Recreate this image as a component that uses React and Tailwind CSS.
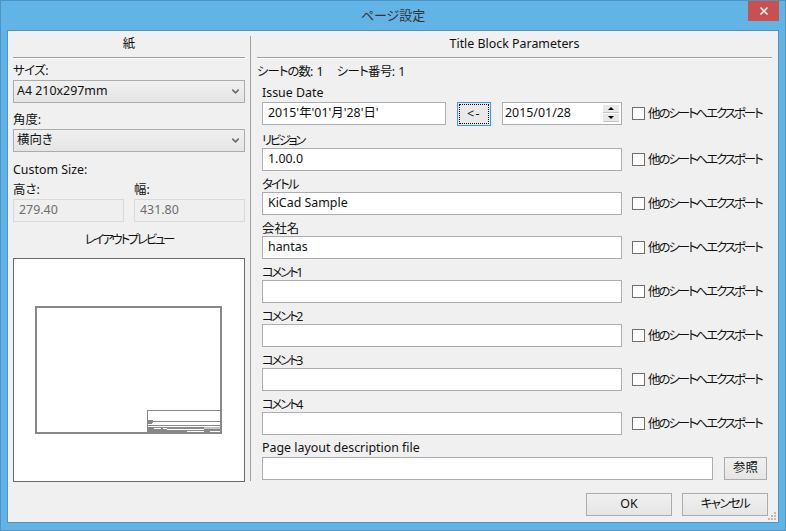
import { ChevronDown, X } from 'lucide-react';

const rows = [
  { label: 'リビジョン', value: '1.00.0', track: 'tracking-[-2.4px]' },
  { label: 'タイトル', value: 'KiCad Sample', track: 'tracking-[-1.8px]' },
  { label: '会社名', value: 'hantas', track: '' },
  { label: 'コメント1', value: '', track: 'tracking-[-2.2px]' },
  { label: 'コメント2', value: '', track: 'tracking-[-2.2px]' },
  { label: 'コメント3', value: '', track: 'tracking-[-2.2px]' },
  { label: 'コメント4', value: '', track: 'tracking-[-2.2px]' },
];

function Label({ children, className = '' }) {
  return <div className={`h-4 leading-4 whitespace-nowrap ${className}`}>{children}</div>;
}

function Field({ children, className = '' }) {
  return (
    <div className={`h-[23px] shrink-0 border border-[#abadb3] bg-white pl-[5px] leading-[19px] whitespace-nowrap ${className}`}>
      {children}
    </div>
  );
}

function Select({ children }) {
  return (
    <div className="mt-px flex h-[23px] items-center justify-between border border-[#acacac] bg-gradient-to-b from-[#f0f0f0] to-[#e5e5e5] pl-[3px] pr-[3px]">
      <span>{children}</span>
      <ChevronDown size={11} strokeWidth={3.5} className="text-[#6d6d6d]" />
    </div>
  );
}

function Disabled({ children }) {
  return (
    <div className="mt-px h-[23px] border border-[#d9d9d9] bg-[#efefef] pl-[5px] leading-[19px] text-[#6d6d6d]">
      {children}
    </div>
  );
}

function Button({ children, className = '' }) {
  return (
    <div className={`flex h-[23px] shrink-0 items-center justify-center border border-[#acacac] bg-gradient-to-b from-[#f0f0f0] to-[#e5e5e5] ${className}`}>
      {children}
    </div>
  );
}

function Export() {
  return (
    <div className="ml-[10px] flex h-[23px] items-center whitespace-nowrap">
      <div className="h-[13px] w-[13px] shrink-0 border border-[#707070] bg-white" />
      <span className="ml-[3px] pt-[2px] tracking-[-2px]">他のシートへエクスポート</span>
    </div>
  );
}

function Header({ children }) {
  return (
    <div className="h-[22px] border-b border-[#a0a0a0] text-center leading-4 shadow-[0_1px_0_#ffffff]">{children}</div>
  );
}

function Preview() {
  return (
    <svg width="232" height="224" className="mt-[10px] block border border-[#696969] bg-white">
      <g fill="#888888">
        <path fillRule="evenodd" d="M21 47H208V175H21ZM23 49V173H206V49Z" />
        <path d="M133 151H206V152H133ZM133 151H134V174H133ZM134 162H206V163H134ZM134 166H206V167H134Z" />
        <path d="M134 161H139V164H134ZM134 164H138V165H134Z" />
        <path d="M134 168H206V174H134Z" />
      </g>
      <g fill="#ffffff">
        <path d="M140 169H147V170H140ZM149 169H153V170H149ZM153 170H190V171H153ZM190 168.500H206V169.500H190ZM173 172H190V173H173ZM196 172H206V173H196Z" />
      </g>
    </svg>
  );
}

export default function App() {
  return (
    <div className="relative flex h-[531px] w-[786px] flex-col border border-[#4f93c1] bg-[#63b4e6] px-[6px] pb-[7px] font-['Noto_Sans','Noto_Sans_CJK_JP',sans-serif] text-[12.4px] text-[#111] [font-feature-settings:'palt']">
      <div className="flex h-[29px] shrink-0 items-center justify-center text-[13px] text-[#333]">ページ設定</div>
      <div className="absolute right-[6px] top-0 flex h-[20px] w-[31px] items-center justify-center bg-[#c75050]">
        <X size={12} strokeWidth={3} className="text-white" />
      </div>

      <div className="relative flex-1 border border-[#4f93c1] bg-[#f0f0f0] pt-[5px]">
        <div className="flex">
          <div className="ml-[5px] w-[232px]">
            <Header>紙</Header>
            <Label className="mt-[5px] tracking-[-0.5px]">サイズ:</Label>
            <Select>A4 210x297mm</Select>
            <Label className="mt-[9px]">角度:</Label>
            <Select>横向き</Select>
            <Label className="mt-[10px]">Custom Size:</Label>
            <div className="mt-[4px] flex gap-[10px]">
              <div className="w-[111px]">
                <Label>高さ:</Label>
                <Disabled>279.40</Disabled>
              </div>
              <div className="w-[111px]">
                <Label>幅:</Label>
                <Disabled>431.80</Disabled>
              </div>
            </div>
            <Label className="mt-[10px] text-center tracking-[-2.2px]">レイアウトプレビュー</Label>
            <Preview />
          </div>

          <div className="ml-[5px] h-[445px] w-px bg-[#a0a0a0]" />

          <div className="ml-[6px] w-[515px]">
            <Header>Title Block Parameters</Header>
            <Label className="mt-[6px] h-[15px]">
              <span className="tracking-[-0.9px]">シートの数</span>: 1
              <span className="ml-[13px] tracking-[-0.6px]">シート番号</span>: 1
            </Label>
            <div className="pl-[5px]">
              <Label className="mt-[6px] h-[15px]">Issue Date</Label>
              <div className="mt-[2px] flex h-[23px] items-start">
                <Field className="w-[184px]">2015'年'01'月'28'日'</Field>
                <div className="ml-[11px] flex h-[24px] w-[34px] shrink-0 items-center justify-center border border-[#3399ff] bg-[#e9e9e9]">
                  <div className="flex h-[20px] w-[30px] items-center justify-center border border-dotted border-black tracking-[1.5px]">&lt;-</div>
                </div>
                <div className="ml-[11px] flex h-[23px] w-[120px] shrink-0 items-center justify-between border border-[#abadb3] bg-white pl-[2px] pr-[2px]">
                  <span className="leading-[19px] self-start">2015/01/28</span>
                  <div className="flex flex-col gap-px">
                    <div className="flex h-[8px] w-[16px] items-center justify-center border-b border-[#c4c4c4] bg-[#e8e8e8]">
                      <div className="h-0 w-0 border-x-[3px] border-b-[3px] border-x-transparent border-b-black" />
                    </div>
                    <div className="flex h-[8px] w-[16px] items-center justify-center border-b border-[#c4c4c4] bg-[#e8e8e8]">
                      <div className="h-0 w-0 border-x-[3px] border-t-[3px] border-x-transparent border-t-black" />
                    </div>
                  </div>
                </div>
                <Export />
              </div>

              {rows.map((row, i) => (
                <div key={row.label}>
                  <Label className={`${i === 0 ? 'mt-[7px]' : 'mt-[5px]'} leading-[18px] ${row.track}`}>{row.label}</Label>
                  <div className="flex items-center">
                    <Field className="w-[360px]">{row.value}</Field>
                    <Export />
                  </div>
                </div>
              ))}

              <Label className="mt-[4px] leading-[18px]">Page layout description file</Label>
              <div className="mt-[2px] flex">
                <Field className="w-[451px]" />
                <Button className="ml-[11px] w-[43px]">参照</Button>
              </div>
            </div>
          </div>
        </div>

        <div className="mt-[11px] flex justify-end gap-[10px] pr-[10px]">
          <Button className="w-[86px]">OK</Button>
          <Button className="w-[86px] tracking-[-1.5px]">キャンセル</Button>
        </div>

        <svg width="10" height="10" className="absolute bottom-[1px] right-[1px]" fill="#bcbcbc">
          <path d="M7 1h2v2H7ZM4 4h2v2H4ZM7 4h2v2H7ZM1 7h2v2H1ZM4 7h2v2H4ZM7 7h2v2H7Z" />
        </svg>
      </div>
    </div>
  );
}
